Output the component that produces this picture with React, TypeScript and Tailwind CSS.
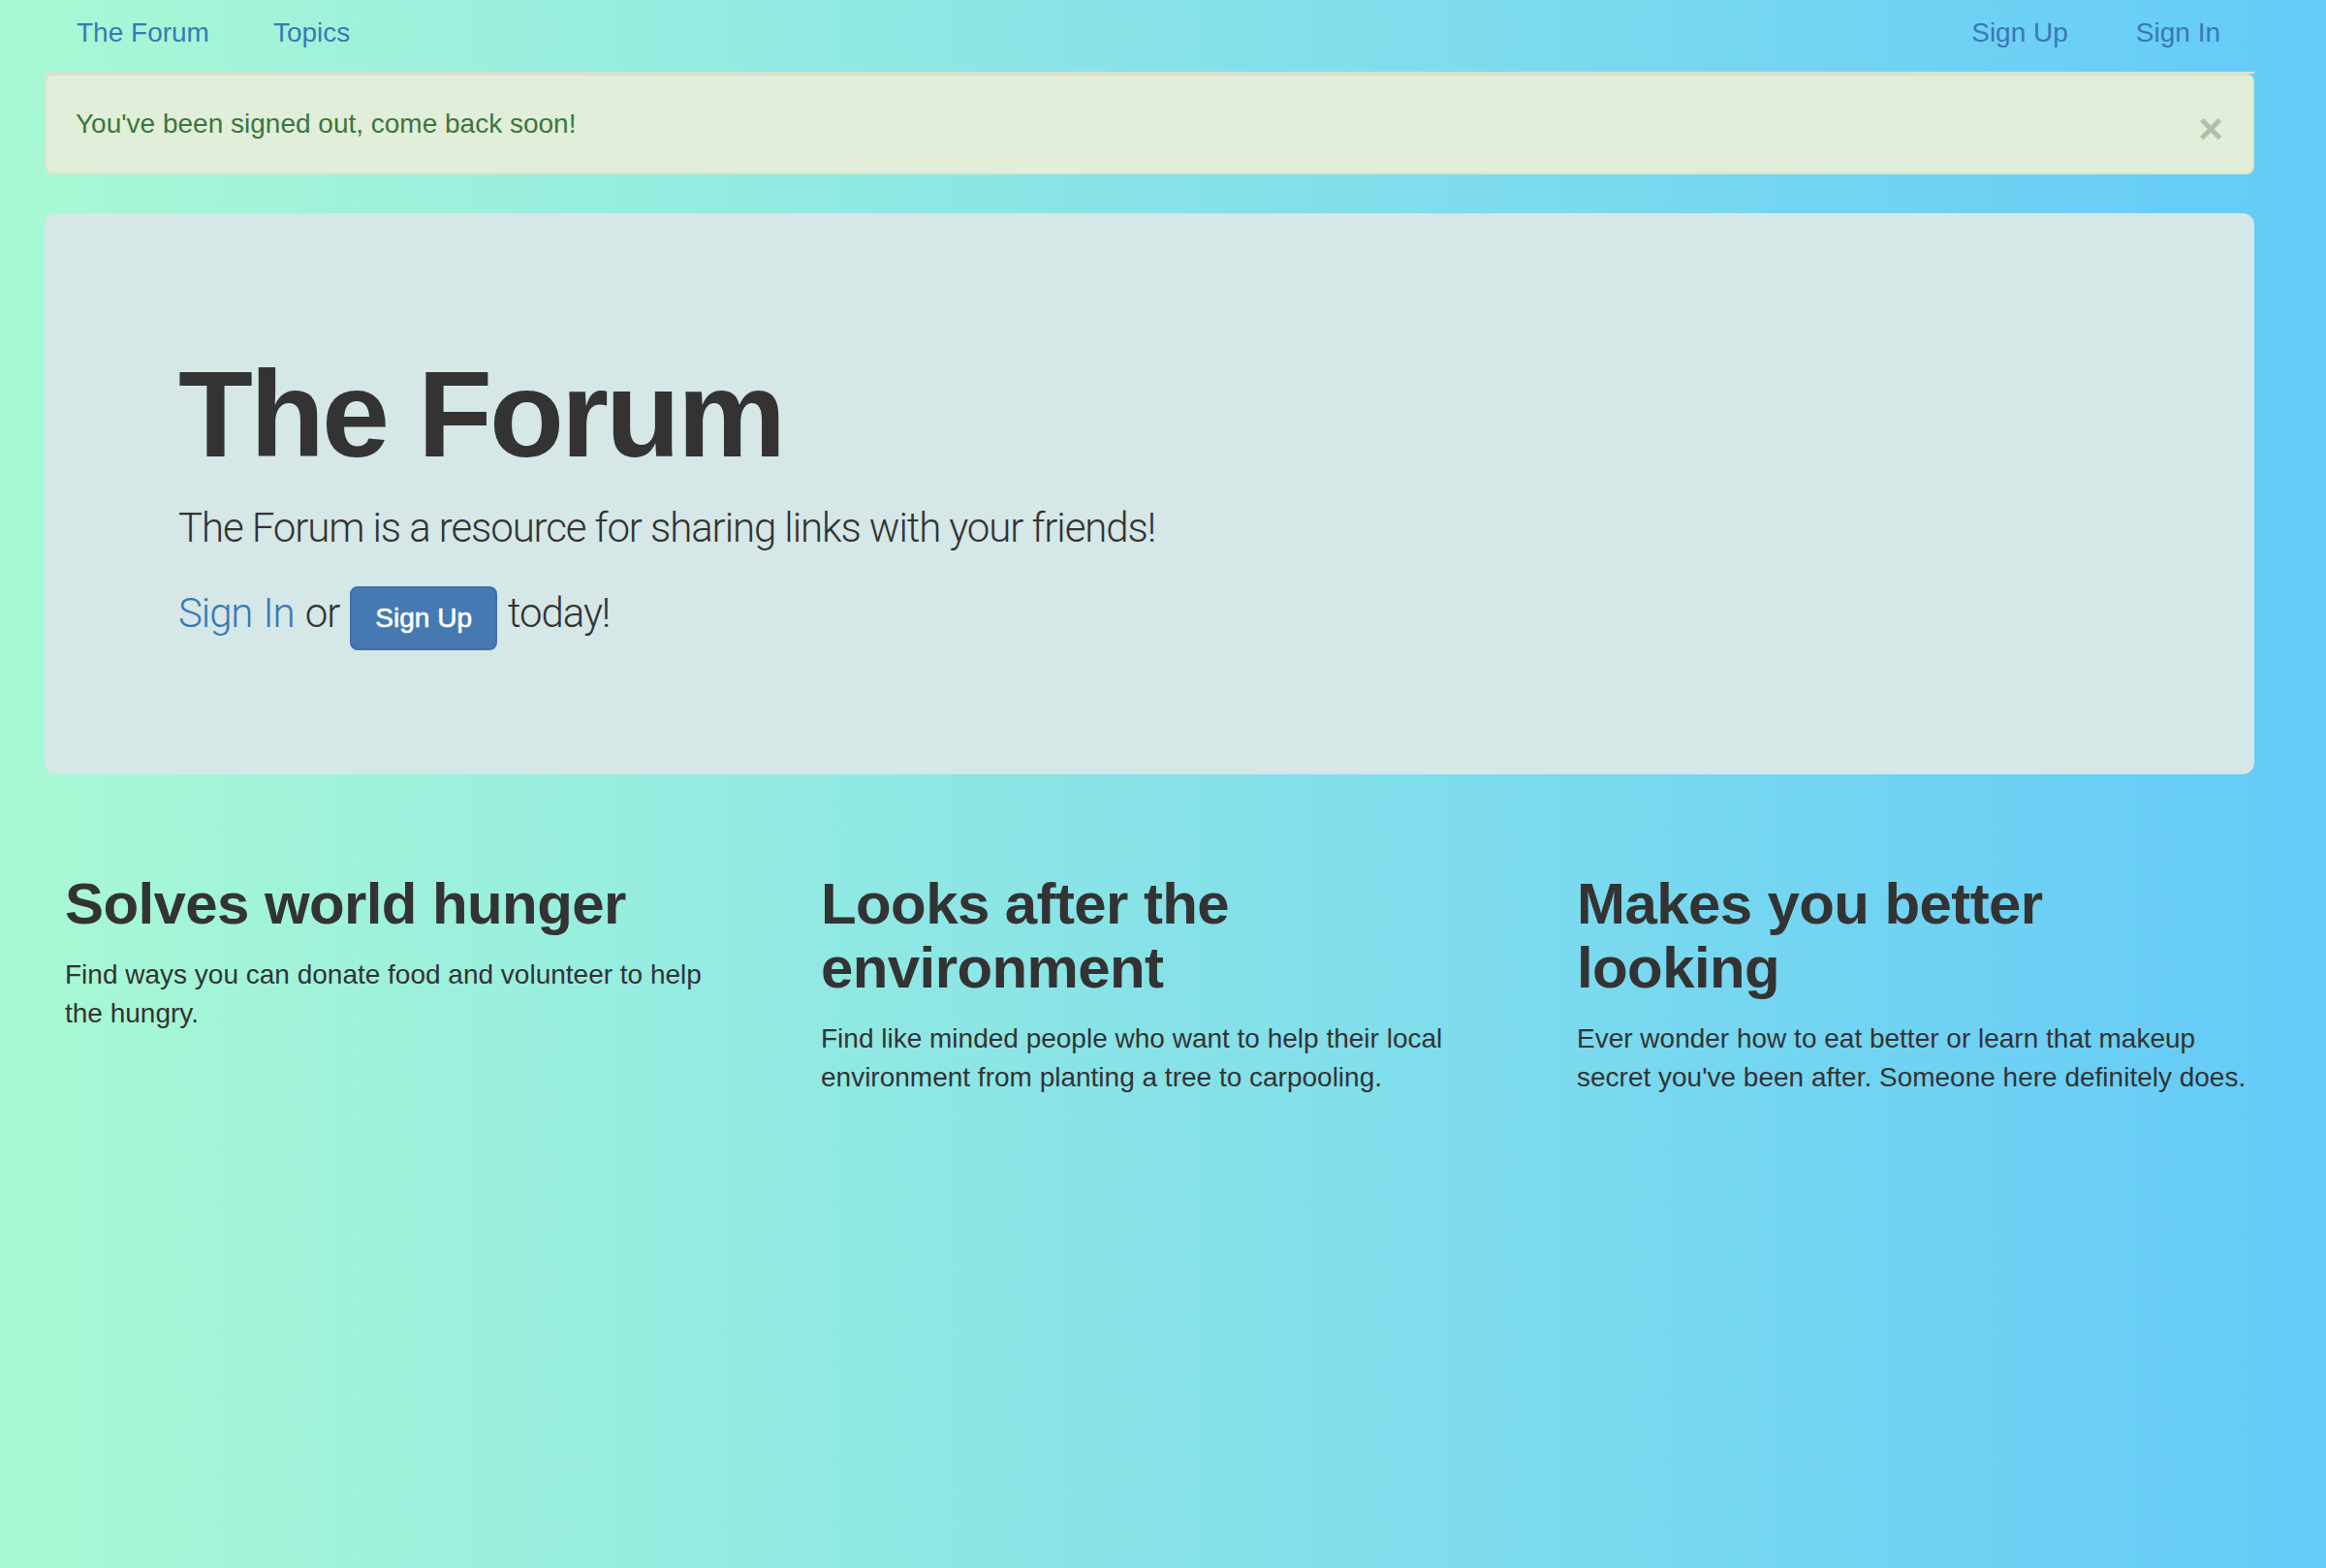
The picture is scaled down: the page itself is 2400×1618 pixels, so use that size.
export default function App() {
  const features = [
    {
      title: "Solves world hunger",
      body: "Find ways you can donate food and volunteer to help the hungry.",
    },
    {
      title: "Looks after the environment",
      body: "Find like minded people who want to help their local environment from planting a tree to carpooling.",
    },
    {
      title: "Makes you better looking",
      body: "Ever wonder how to eat better or learn that makeup secret you've been after. Someone here definitely does.",
    },
  ];

  return (
    <div className="min-h-[1618px] w-full bg-gradient-to-r from-[#a9f9d4] to-[#64caf8] font-['Liberation_Sans',Arial,sans-serif] text-[#333333]">
      <div className="ml-[46px] w-[2280px]">
        <nav className="flex h-[76px] items-start justify-between border-b-2 border-[#dddddd] pt-[14px] text-[28px] leading-[40px] text-[#3a78b6]">
          <div className="flex">
            <a className="px-[33px]">The Forum</a>
            <a className="px-[33px]">Topics</a>
          </div>
          <div className="flex">
            <a className="px-[35px]">Sign Up</a>
            <a className="px-[35px]">Sign In</a>
          </div>
        </nav>

        <div className="flex items-start justify-between rounded-[8px] border-2 border-[#d8e6c7] bg-[#e1eed9] p-[30px] text-[28px] leading-[40px] text-[#3c763d]">
          <span>You've been signed out, come back soon!</span>
          <span className="translate-y-[5px] text-[44px] font-bold leading-[40px] text-[#b1bfab]">×</span>
        </div>

        <div className="mt-[40px] rounded-[12px] bg-[#d5e7e7] pb-[128px] pl-[138px] pt-[139px]">
          <h1 className="text-[126px] font-bold leading-[138px] tracking-[-3px]">The Forum</h1>
          <p className="mt-[18px] font-['Roboto',sans-serif] text-[42px] font-light leading-[60px] tracking-[-1.1px]">
            The Forum is a resource for sharing links with your friends!
          </p>
          <p className="mt-[28px] font-['Roboto',sans-serif] text-[42px] font-light leading-[60px] tracking-[-1.1px] [word-spacing:2px]">
            <a className="text-[#3a78b6]">Sign In</a> or{" "}
            <button className="inline-block rounded-[8px] border-2 border-[#3f6fa6] bg-[#4679b2] px-[24px] py-[11px] align-baseline font-['Liberation_Sans',Arial,sans-serif] text-[28px] font-normal leading-[40px] tracking-normal text-white [word-spacing:0px] [-webkit-text-stroke:0.6px_#ffffff]">
              Sign Up
            </button>{" "}
            today!
          </p>
        </div>

        <div className="ml-[21px] mt-[101px] grid grid-cols-[700px_700px_700px] gap-x-[80px]">
          {features.map((f) => (
            <div key={f.title}>
              <h2 className="text-[60px] font-bold leading-[66px] tracking-[-0.6px]">{f.title}</h2>
              <p className="mt-[20px] text-[28px] leading-[40px]">{f.body}</p>
            </div>
          ))}
        </div>
      </div>
    </div>
  );
}
